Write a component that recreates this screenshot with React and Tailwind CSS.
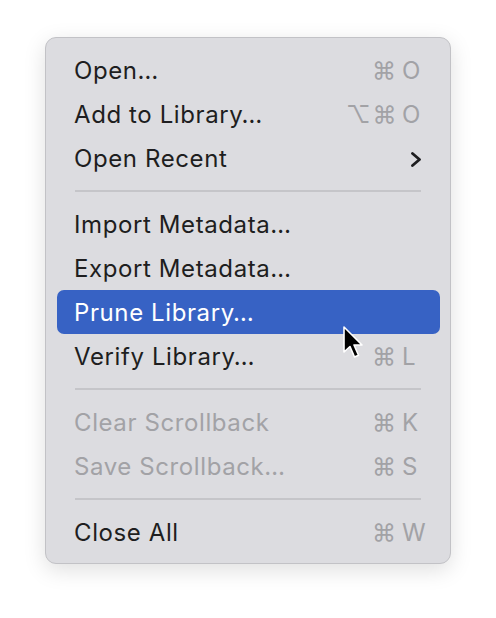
import React from "react";

const font = { fontFamily: "Inter, 'Noto Sans', 'Liberation Sans', sans-serif" };

function Shortcut({ mods = "", keyName }) {
  return (
    <div className="flex items-center text-[#a2a2a6] tracking-normal">
      <span className="w-[52px] text-right tracking-[2px]">{mods}</span>
      <span className="w-[26px] pl-[4px]">{keyName}</span>
    </div>
  );
}

function Item({ label, mods, keyName, disabled, highlighted, chevron }) {
  return (
    <div
      className={
        "ml-[11px] mr-[10px] h-[44px] rounded-[7px] flex items-center justify-between pl-[17px] pr-[16px] " +
        (highlighted ? "bg-[#3762c4] text-white" : disabled ? "text-[#a2a2a6]" : "text-[#1e1e20]")
      }
    >
      <span className="pt-[2px] tracking-[0.6px]">{label}</span>
      {chevron ? (
        <svg width="14" height="15" viewBox="0 0 14 15" className="mr-[1px] mt-[2px]">
          <path d="M3.5 1.5 L10.5 7.5 L3.5 13.5" fill="none" stroke="#1e1e20" strokeWidth="2.8" strokeLinecap="round" strokeLinejoin="round" />
        </svg>
      ) : keyName ? (
        <div className="pt-[2px]">
          <Shortcut mods={mods} keyName={keyName} />
        </div>
      ) : null}
    </div>
  );
}

function Sep() {
  return (
    <div className="h-[22px] flex items-center px-[29px]">
      <div className="h-[2px] w-full bg-[#c5c5c9]" />
    </div>
  );
}

export default function App() {
  return (
    <div className="w-[496px] h-[618px] bg-white pl-[45px] pt-[37px]" style={font}>
      <div className="relative w-[406px] h-[527px] rounded-[11px] bg-[#dcdce0] border border-[#c2c2c6] shadow-[0_6px_22px_rgba(0,0,0,0.13)] pt-[10px] text-[24px] leading-none">
        <Item label="Open…" mods="⌘" keyName="O" />
        <Item label="Add to Library…" mods="⌥⌘" keyName="O" />
        <Item label="Open Recent" chevron />
        <Sep />
        <Item label="Import Metadata…" />
        <Item label="Export Metadata…" />
        <Item label="Prune Library…" highlighted />
        <Item label="Verify Library…" mods="⌘" keyName="L" />
        <Sep />
        <Item label="Clear Scrollback" mods="⌘" keyName="K" disabled />
        <Item label="Save Scrollback…" mods="⌘" keyName="S" disabled />
        <Sep />
        <Item label="Close All" mods="⌘" keyName="W" />
        <svg
          className="absolute left-[296px] top-[288px]"
          width="22"
          height="34"
          viewBox="0 0 22 34"
        >
          <path
            d="M2 1 L2 26 L8 20.5 L12.5 31 L16.5 29.2 L12 19 L20 19 Z"
            fill="#000"
            stroke="#fff"
            strokeWidth="1.6"
            strokeLinejoin="round"
          />
        </svg>
      </div>
    </div>
  );
}
